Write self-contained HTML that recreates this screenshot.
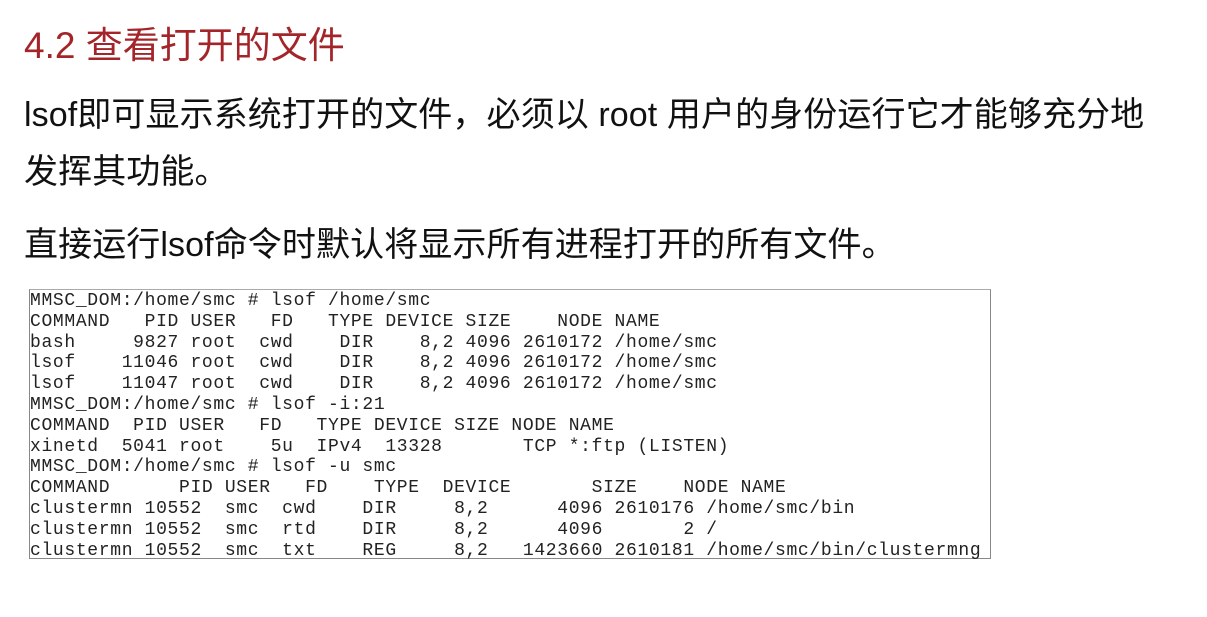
<!DOCTYPE html>
<html><head><meta charset="utf-8"><style>
html,body{margin:0;padding:0;background:#fff;width:1207px;height:617px;overflow:hidden;position:relative}
.t{position:absolute;left:24px;top:15px;font:37px "Liberation Sans","Noto Sans CJK SC",sans-serif;color:#a3252a;white-space:nowrap}
.p{position:absolute;left:24px;font:34px "Liberation Sans","Noto Sans CJK SC",sans-serif;color:#111;white-space:nowrap;letter-spacing:0.1px}
.box{position:absolute;left:29px;top:289px;width:962px;height:270px;border:1px solid #888;border-top-color:#aaa;box-sizing:border-box}
pre{position:absolute;left:30px;top:291px;margin:0;font:18px/20.8px "Liberation Mono",monospace;color:#222;letter-spacing:0.66px}
</style></head><body>
<div class="t">4.2 查看打开的文件</div>
<div class="p" style="top:87px">lsof即可显示系统打开的文件，必须以 root 用户的身份运行它才能够充分地</div>
<div class="p" style="top:144px">发挥其功能。</div>
<div class="p" style="top:217px">直接运行lsof命令时默认将显示所有进程打开的所有文件。</div>
<div class="box"></div>
<pre>MMSC_DOM:/home/smc # lsof /home/smc
COMMAND   PID USER   FD   TYPE DEVICE SIZE    NODE NAME
bash     9827 root  cwd    DIR    8,2 4096 2610172 /home/smc
lsof    11046 root  cwd    DIR    8,2 4096 2610172 /home/smc
lsof    11047 root  cwd    DIR    8,2 4096 2610172 /home/smc
MMSC_DOM:/home/smc # lsof -i:21
COMMAND  PID USER   FD   TYPE DEVICE SIZE NODE NAME
xinetd  5041 root    5u  IPv4  13328       TCP *:ftp (LISTEN)
MMSC_DOM:/home/smc # lsof -u smc
COMMAND      PID USER   FD    TYPE  DEVICE       SIZE    NODE NAME
clustermn 10552  smc  cwd    DIR     8,2      4096 2610176 /home/smc/bin
clustermn 10552  smc  rtd    DIR     8,2      4096       2 /
clustermn 10552  smc  txt    REG     8,2   1423660 2610181 /home/smc/bin/clustermng</pre>
</body></html>
